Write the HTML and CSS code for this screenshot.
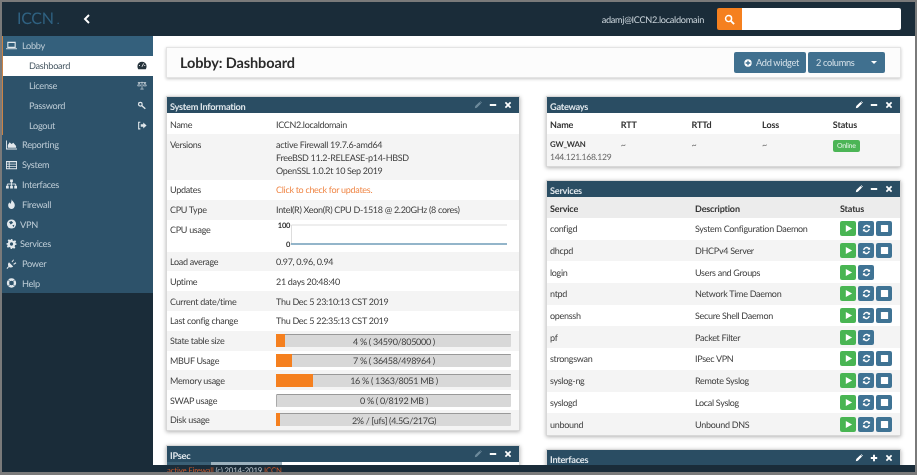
FILE: index.html
```html
<!DOCTYPE html>
<html lang="en">
<head>
<meta charset="utf-8">
<title>Lobby: Dashboard</title>
<link rel="stylesheet" href="styles.css">
</head>
<body>
<svg class="defs" width="0" height="0" aria-hidden="true">
  <symbol id="i-play" viewBox="0 0 10 10"><path d="M2 1l7 4-7 4z"/></symbol>
  <symbol id="i-refresh" viewBox="0 0 10 10"><path d="M1.200 4.400A3.900 3.900 0 0 1 8 2.300L9 1.300v3H6l1-1A2.500 2.500 0 0 0 2.700 4.400zM8.800 5.600A3.900 3.900 0 0 1 2 7.700L1 8.700v-3h3l-1 1a2.500 2.500 0 0 0 4.300-1.100z"/></symbol>
  <symbol id="i-stop" viewBox="0 0 10 10"><rect x="1" y="1" width="8" height="8" rx=".6"/></symbol>
  <symbol id="i-pencil" viewBox="0 0 10 10"><path d="M1 9l.6-2.600L6.800 1.200l2 2L3.600 8.400zM7.300.7l.7-.5 1.800 1.800-.5.700z"/></symbol>
  <symbol id="i-minus" viewBox="0 0 10 10"><rect x="1" y="3.800" width="8" height="2.400"/></symbol>
  <symbol id="i-close" viewBox="0 0 10 10"><path d="M2.500 1L5 3.500 7.500 1 9 2.500 6.500 5 9 7.500 7.500 9 5 6.500 2.500 9 1 7.500 3.500 5 1 2.500z"/></symbol>
  <symbol id="i-plus" viewBox="0 0 10 10"><path d="M3.800 1h2.400v2.800H9v2.400H6.200V9H3.800V6.200H1V3.800h2.800z"/></symbol>
</svg>
<div class="app">
  <header class="topbar">
    <div class="brand"><span class="logo">ICCN</span><span class="logo-dot">.</span></div>
    <svg class="collapse" viewBox="0 0 10 12"><path d="M7.500 1L2.500 6l5 5" fill="none" stroke="#fff" stroke-width="2.400"/></svg>
    <div class="user">adamj@ICCN2.localdomain</div>
    <div class="search">
      <button class="search-btn" type="button"><svg viewBox="0 0 12 12"><circle cx="5" cy="5" r="3.300" fill="none" stroke="#fff" stroke-width="1.600"/><path d="M7.500 7.500L11 11" stroke="#fff" stroke-width="2"/></svg></button>
      <div class="search-input"></div>
    </div>
  </header>
  <div class="body">
    <nav class="sidebar">
      <div class="nav-group">
        <div class="nav-item lobby"><svg class="nav-ico" viewBox="0 0 12 10"><path d="M2 1h8v5.500H2z" fill="none" stroke="currentColor" stroke-width="1.200"/><path d="M0 7.500h12v1H0z"/></svg><span>Lobby</span></div>
        <div class="nav-sub active"><span>Dashboard</span><svg class="sub-ico" viewBox="0 0 12 10"><path d="M6 .5a5.500 5.500 0 0 1 5.500 5.500c0 1.500-.5 2.600-1 3.500h-9C1 8.600.5 7.500.5 6A5.500 5.500 0 0 1 6 .5z"/><path d="M6 6.500L8 2.500" stroke="#fff" stroke-width="1"/><circle cx="3" cy="5" r=".7" fill="#fff"/><circle cx="9.300" cy="5" r=".7" fill="#fff"/></svg></div>
        <div class="nav-sub"><span>License</span><svg class="sub-ico" viewBox="0 0 12 10"><path d="M1 1.500h10M6 .5v8.500M4 9.300h4M2.500 1.500L.8 5.500h3.400zM9.500 1.500L7.800 5.500h3.400z" fill="none" stroke="currentColor" stroke-width=".8"/></svg></div>
        <div class="nav-sub"><span>Password</span><svg class="sub-ico" viewBox="0 0 12 10"><circle cx="4" cy="3.500" r="2.200" fill="none" stroke="currentColor" stroke-width="1.500"/><path d="M5.500 5l4.500 4" stroke="currentColor" stroke-width="1.700"/></svg></div>
        <div class="nav-sub"><span>Logout</span><svg class="sub-ico" viewBox="0 0 12 10"><path d="M4 1H2v8h2" fill="none" stroke="currentColor" stroke-width="1.300"/><path d="M4.500 3.500H7.500V1.500L11.500 5 7.500 8.500v-2H4.500z"/></svg></div>
      </div>
      <div class="nav-item"><svg class="nav-ico" viewBox="0 0 12 10"><path d="M0 0h1v8.800h11V10H0z"/><path d="M2 8V5l2-3 2 2 2-1.500L11 6v2z"/></svg><span>Reporting</span></div>
      <div class="nav-item"><svg class="nav-ico" viewBox="0 0 12 10"><path d="M0 .5h12v9H0zM1 2v1.500h2V2zM4 2v1.500h7V2zM1 4.500V6h2V4.500zM4 4.500V6h7V4.500zM1 7v1.500h2V7zM4 7v1.500h7V7z" fill-rule="evenodd"/></svg><span>System</span></div>
      <div class="nav-item"><svg class="nav-ico" viewBox="0 0 12 10"><path d="M4.500 0h3v3h-3zM0 7h3v3H0zM4.500 7h3v3h-3zM9 7h3v3H9z"/><path d="M1.500 7V5h9v2M6 3v4" fill="none" stroke="currentColor"/></svg><span>Interfaces</span></div>
      <div class="nav-item"><svg class="nav-ico" viewBox="0 0 12 12"><path d="M6 0c.5 2.500 4 4 4 7.500C10 10 8 12 6 12s-4-1.500-4-4.500C2 6 3 5 3.500 4c.3 1 .7 1.500 1.300 1.700C5.500 4 6.500 2 6 0z"/></svg><span>Firewall</span></div>
      <div class="nav-item short"><svg class="nav-ico" viewBox="0 0 12 12"><circle cx="6" cy="6" r="5.500"/><path d="M3 3.500l3-1 2 2-3 2zM7 7.500l2.500-.5-1 3z" fill="#2d526a"/></svg><span>VPN</span></div>
      <div class="nav-item short"><svg class="nav-ico" viewBox="0 0 12 12"><path d="M5 0h2l.3 1.700 1.500.6L10.200 1.400l1.400 1.400-.9 1.400.6 1.500L12 5v2l-1.700.3-.6 1.500.9 1.400-1.400 1.400-1.400-.9-1.500.6L7 12H5l-.3-1.700-1.500-.6-1.400.9L.4 9.200l.9-1.400-.6-1.500L0 7V5l1.700-.3.6-1.500-.9-1.400L2.800.4l1.400.9 1.500-.6z"/><circle cx="6" cy="6" r="2" fill="#2d526a"/></svg><span>Services</span></div>
      <div class="nav-item"><svg class="nav-ico" viewBox="0 0 12 12"><path d="M3 4l5 5c-1.500 1.500-3.500 1.500-5 .5L1 12 0 11l2.300-2.200C1.500 7.500 1.500 5.500 3 4zM6 3.500L8 .5l1 .8-2 2.700zM8 6l3-2 .8 1-2.800 2z"/></svg><span>Power</span></div>
      <div class="nav-item"><svg class="nav-ico" viewBox="0 0 12 12"><circle cx="6" cy="6" r="4.200" fill="none" stroke="currentColor" stroke-width="2.800"/><path d="M2 2l2.400 2.400M10 2L7.600 4.400M2 10l2.400-2.400M10 10L7.600 7.600" stroke="#2d526a"/></svg><span>Help</span></div>
    </nav>
    <main class="main">
      <div class="title-bar">
        <h1>Lobby: Dashboard</h1>
        <div class="title-actions">
          <button class="btn add" type="button"><svg viewBox="0 0 12 12"><circle cx="6" cy="6" r="5.500" fill="#fff"/><path d="M5 2.500h2V5h2.500v2H7v2.500H5V7H2.500V5H5z" fill="#3f7091"/></svg><span>Add widget</span></button>
          <button class="btn cols" type="button"><span>2 columns</span><i class="caret"></i></button>
        </div>
      </div>
      <div class="columns">
        <div class="col">
          <section class="panel">
            <div class="panel-head"><span class="head-title">System Information</span><span class="tools"><svg class="dim"><use href="#i-pencil"/></svg><svg><use href="#i-minus"/></svg><svg><use href="#i-close"/></svg></span></div>
            <div class="row r1"><div class="k">Name</div><div class="v">ICCN2.localdomain</div></div>
            <div class="row alt r-ver"><div class="k">Versions</div><div class="v">active Firewall 19.7.6-amd64<br>FreeBSD 11.2-RELEASE-p14-HBSD<br>OpenSSL 1.0.2t 10 Sep 2019</div></div>
            <div class="row"><div class="k">Updates</div><div class="v link">Click to check for updates.</div></div>
            <div class="row alt"><div class="k">CPU Type</div><div class="v">Intel(R) Xeon(R) CPU D-1518 @ 2.20GHz (8 cores)</div></div>
            <div class="row r-cpu"><div class="k">CPU usage</div><div class="v chart">
              <div class="chart-y"><b>100</b><b>0</b></div>
              <svg class="chart-plot" viewBox="0 0 216 24"><path d="M0.500 2h216M0.500 2v19" fill="none" stroke="#ddd"/><path d="M0 21h216" stroke="#6f9cb9" stroke-width="1.500"/></svg>
            </div></div>
            <div class="row alt"><div class="k">Load average</div><div class="v">0.97, 0.96, 0.94</div></div>
            <div class="row"><div class="k">Uptime</div><div class="v">21 days 20:48:40</div></div>
            <div class="row alt"><div class="k">Current date/time</div><div class="v">Thu Dec 5 23:10:13 CST 2019</div></div>
            <div class="row"><div class="k">Last config change</div><div class="v">Thu Dec 5 22:35:13 CST 2019</div></div>
            <div class="row alt"><div class="k">State table size</div><div class="v"><div class="bar"><div class="fill" style="width:3.700%"></div><span>4 % ( 34590/805000 )</span></div></div></div>
            <div class="row"><div class="k">MBUF Usage</div><div class="v"><div class="bar"><div class="fill" style="width:6.800%"></div><span>7 % ( 36458/498964 )</span></div></div></div>
            <div class="row alt"><div class="k">Memory usage</div><div class="v"><div class="bar"><div class="fill" style="width:16%"></div><span>16 % ( 1363/8051 MB )</span></div></div></div>
            <div class="row"><div class="k">SWAP usage</div><div class="v"><div class="bar"><div class="fill" style="width:0"></div><span>0 % ( 0/8192 MB )</span></div></div></div>
            <div class="row alt"><div class="k">Disk usage</div><div class="v"><div class="bar"><div class="fill" style="width:1.800%"></div><span>2% / [ufs] (4.5G/217G)</span></div></div></div>
          </section>
          <section class="panel clipped">
            <div class="panel-head"><span class="head-title">IPsec</span><span class="tools"><svg class="dim"><use href="#i-pencil"/></svg><svg><use href="#i-minus"/></svg><svg><use href="#i-close"/></svg></span></div>
            <div class="tabs"><i class="tab-a"></i><i class="tab-b"></i></div>
          </section>
        </div>
        <div class="col col-wide">
          <section class="panel gateways">
            <div class="panel-head"><span class="head-title">Gateways</span><span class="tools"><svg><use href="#i-pencil"/></svg><svg><use href="#i-minus"/></svg><svg><use href="#i-close"/></svg></span></div>
            <div class="gw-grid gw-head"><b>Name</b><b>RTT</b><b>RTTd</b><b>Loss</b><b>Status</b></div>
            <div class="gw-grid gw-row">
              <div class="gw-name"><b>GW_WAN</b><small>144.121.168.129</small></div>
              <div>~</div><div>~</div><div>~</div>
              <div><span class="online">Online</span></div>
            </div>
          </section>
          <section class="panel services tight">
            <div class="panel-head"><span class="head-title">Services</span><span class="tools"><svg><use href="#i-pencil"/></svg><svg><use href="#i-minus"/></svg><svg><use href="#i-close"/></svg></span></div>
            <div class="svc svc-head"><b>Service</b><b>Description</b><b>Status</b></div>
            <div class="svc"><div>configd</div><div>System Configuration Daemon</div><div class="acts"><i class="go"><svg><use href="#i-play"/></svg></i><i class="bl"><svg><use href="#i-refresh"/></svg></i><i class="bl"><svg><use href="#i-stop"/></svg></i></div></div>
            <div class="svc alt"><div>dhcpd</div><div>DHCPv4 Server</div><div class="acts"><i class="go"><svg><use href="#i-play"/></svg></i><i class="bl"><svg><use href="#i-refresh"/></svg></i><i class="bl"><svg><use href="#i-stop"/></svg></i></div></div>
            <div class="svc"><div>login</div><div>Users and Groups</div><div class="acts"><i class="go"><svg><use href="#i-play"/></svg></i><i class="bl"><svg><use href="#i-refresh"/></svg></i></div></div>
            <div class="svc alt"><div>ntpd</div><div>Network Time Daemon</div><div class="acts"><i class="go"><svg><use href="#i-play"/></svg></i><i class="bl"><svg><use href="#i-refresh"/></svg></i><i class="bl"><svg><use href="#i-stop"/></svg></i></div></div>
            <div class="svc"><div>openssh</div><div>Secure Shell Daemon</div><div class="acts"><i class="go"><svg><use href="#i-play"/></svg></i><i class="bl"><svg><use href="#i-refresh"/></svg></i><i class="bl"><svg><use href="#i-stop"/></svg></i></div></div>
            <div class="svc alt"><div>pf</div><div>Packet Filter</div><div class="acts"><i class="go"><svg><use href="#i-play"/></svg></i><i class="bl"><svg><use href="#i-refresh"/></svg></i></div></div>
            <div class="svc"><div>strongswan</div><div>IPsec VPN</div><div class="acts"><i class="go"><svg><use href="#i-play"/></svg></i><i class="bl"><svg><use href="#i-refresh"/></svg></i><i class="bl"><svg><use href="#i-stop"/></svg></i></div></div>
            <div class="svc alt"><div>syslog-ng</div><div>Remote Syslog</div><div class="acts"><i class="go"><svg><use href="#i-play"/></svg></i><i class="bl"><svg><use href="#i-refresh"/></svg></i><i class="bl"><svg><use href="#i-stop"/></svg></i></div></div>
            <div class="svc"><div>syslogd</div><div>Local Syslog</div><div class="acts"><i class="go"><svg><use href="#i-play"/></svg></i><i class="bl"><svg><use href="#i-refresh"/></svg></i><i class="bl"><svg><use href="#i-stop"/></svg></i></div></div>
            <div class="svc alt"><div>unbound</div><div>Unbound DNS</div><div class="acts"><i class="go"><svg><use href="#i-play"/></svg></i><i class="bl"><svg><use href="#i-refresh"/></svg></i><i class="bl"><svg><use href="#i-stop"/></svg></i></div></div>
          </section>
          <section class="panel clipped tight">
            <div class="panel-head"><span class="head-title">Interfaces</span><span class="tools"><svg><use href="#i-pencil"/></svg><svg><use href="#i-plus"/></svg><svg><use href="#i-close"/></svg></span></div>
          </section>
        </div>
      </div>
    </main>
  </div>
  <footer class="footer"><span class="fo">active Firewall</span> (c) 2014-2019 <span class="fo">ICCN</span></footer>
</div>
</body>
</html>
```

FILE: styles.css
```css
* { box-sizing: border-box; }
html, body { margin: 0; height: 100%; }
body {
  background: #7a7a7a;
  font: 9px/13px Lato, "Noto Sans", sans-serif;
  letter-spacing: -.3px;
  text-rendering: geometricPrecision;
  color: #404040;
  overflow: hidden;
}
.defs { position: absolute; }
.app {
  width: 913px;
  height: 470px;
  margin: 2px 0 0 2px;
  display: flex;
  flex-direction: column;
  background: #1a2c39;
  filter: blur(.4px);
}

/* top bar */
.topbar {
  height: 34px;
  flex: none;
  display: flex;
  align-items: center;
  padding-right: 14px;
  background: #1a2c39;
}
.brand { width: 81px; padding-left: 15px; }
.logo { font-size: 16px; color: #2f6181; letter-spacing: -.3px; }
.logo-dot { margin-left: 3px; color: #2f6181; font-size: 12px; }
.collapse { width: 8px; height: 10px; }
.user { margin-left: auto; color: #c8d2d9; font-size: 9.200px; }
.search { display: flex; margin-left: 13px; height: 22px; }
.search-btn {
  width: 25px;
  border: 0;
  padding: 0;
  background: #f5801f;
  border-radius: 2px 0 0 2px;
  display: flex;
  align-items: center;
  justify-content: center;
}
.search-btn svg { width: 11px; height: 11px; }
.search-input { width: 159px; background: #fff; border-radius: 0 2px 2px 0; }

/* layout */
.body { height: 429px; flex: none; display: flex; overflow: hidden; }
.sidebar { width: 151px; flex: none; background: #1a2c39; }
.nav-group { border-left: 1px solid #c98347; }
.nav-item {
  height: 19.800px;
  display: flex;
  align-items: center;
  gap: 5px;
  padding-left: 4px;
  background: #2d526a;
  color: #bccbd5;
  font-size: 9.200px;
}
.nav-item.short { gap: 3px; }
.nav-ico { width: 11px; height: 10px; fill: currentColor; flex: none; color: #e3e9ed; }
.nav-item.lobby { background: #34607c; padding-left: 3px; }
.nav-sub {
  height: 19.800px;
  display: flex;
  align-items: center;
  justify-content: space-between;
  padding: 0 6px 0 26px;
  background: #2d526a;
  color: #bccbd5;
  font-size: 9.200px;
}
.nav-sub.active { background: #fff; color: #4a5a65; }
.sub-ico { width: 10px; height: 9px; fill: currentColor; color: #dfe6ea; }
.nav-sub.active .sub-ico { color: #26333c; }

/* main */
.main { flex: 1; background: #fff; padding: 11px 14px 0 13px; overflow: hidden; }
.title-bar {
  height: 31px;
  display: flex;
  align-items: center;
  justify-content: space-between;
  padding: 0 15px 0 13px;
  background: #fcfcfc;
  border: 1px solid #e4e4e4;
  box-shadow: 0 1px 3px rgba(0,0,0,.22);
}
h1 { margin: 0; padding-top: 1px; font-size: 14.500px; font-weight: 700; color: #2b2b2b; letter-spacing: -.12px; }
.title-actions { display: flex; gap: 2px; }
.btn {
  height: 21px;
  border: 0;
  border-radius: 2px;
  background: #40708f;
  color: #d5e1e9;
  font: 9.200px Lato, "Noto Sans", sans-serif;
  letter-spacing: -.3px;
  display: flex;
  align-items: center;
  white-space: nowrap;
}
.btn.add { width: 72px; gap: 4px; padding: 0 0 0 10px; }
.btn.add svg { width: 8px; height: 8px; flex: none; }
.btn.cols { width: 77px; justify-content: space-between; padding: 0 8px; }
.caret { width: 0; height: 0; border: 3px solid transparent; border-top: 3px solid #fff; border-bottom: 0; }
.columns { display: flex; justify-content: space-between; margin-top: 18px; }
.col { width: 354px; display: flex; flex-direction: column; }
.col-wide { width: 355px; }

/* panels */
.panel { background: #fff; border: 1px solid #d8d8d8; box-shadow: 0 1px 4px rgba(0,0,0,.3); }
.panel + .panel { margin-top: 14px; }
.panel + .panel.tight { margin-top: 13px; }
.panel-head {
  height: 16px;
  display: flex;
  align-items: center;
  justify-content: space-between;
  padding: 0 7px 0 3px;
  background: #2a4d63;
  color: #dfe6eb;
  font-weight: 700;
  font-size: 9.200px;
  letter-spacing: -.25px;
}
.head-title { padding-top: 3px; }
.tools { display: flex; gap: 7px; }
.tools svg { width: 8px; height: 8px; fill: #fff; }
.tools svg.dim { fill: #6d8a9b; }
.row { height: 19.800px; display: flex; align-items: center; }
.row.alt { background: #f4f4f4; }
.r1 { height: 21px; padding-top: 2px; }
.r-ver { height: 46px; align-items: flex-start; padding-top: 4px; }
.r-cpu { height: 32px; align-items: flex-start; padding-top: 1px; }
.r-cpu .k { margin-top: 2px; }
.k { width: 109px; flex: none; padding-left: 3px; }
.v { flex: 1; min-width: 0; padding-right: 8px; }
.link { color: #f0894a; }
.chart { display: flex; gap: 1px; }
.chart-y { width: 14px; height: 28px; display: flex; flex-direction: column; justify-content: space-between; align-items: flex-end; font-size: 7.500px; line-height: 9px; color: #333; }
.chart-plot { width: 216px; height: 24px; flex: none; margin-top: 2px; }
.bar {
  position: relative;
  height: 13px;
  background: #d8d8d8;
  border-top: 1px solid #999;
  border-left: 1px solid #aaa;
  border-radius: 1px;
  display: flex;
  align-items: center;
  justify-content: center;
}
.bar span { position: relative; }
.fill { position: absolute; left: -1px; top: -1px; bottom: 0; background: #f5801f; }

.clipped { height: 30px; overflow: hidden; }
.tabs { display: flex; height: 3px; }
.tab-a { width: 44px; background: #3b6076; }
.tab-b { width: 71px; background: #9cb1bd; }

/* gateways */
.gw-grid { display: grid; grid-template-columns: 70.700px 70.700px 70.700px 70.700px 1fr; padding-left: 3px; }
.gw-head { height: 21px; padding-top: 2px; align-items: center; color: #333; letter-spacing: -.1px; }
.gw-row { height: 32px; background: #f5f5f5; padding-top: 4px; color: #666; }
.gw-name b { display: block; color: #333; font-size: 7.800px; line-height: 13px; letter-spacing: -.2px; }
.gw-name small { display: block; font-size: 8.600px; line-height: 13px; }
.online {
  display: inline-block;
  width: 27px;
  height: 12px;
  line-height: 12px;
  text-align: center;
  background: #4cb556;
  color: #e5f5e7;
  font-size: 7px;
  border-radius: 2px;
}

/* services */
.svc { display: grid; grid-template-columns: 145px 145px 1fr; align-items: center; height: 21.700px; padding-left: 3px; }
.svc.alt { background: #f4f4f4; }
.svc-head { height: 21px; padding-top: 2px; background: #ececec; color: #333; letter-spacing: -.15px; }
.acts { display: flex; gap: 2px; }
.acts i { width: 16px; height: 15px; border-radius: 2px; display: flex; align-items: center; justify-content: center; }
.acts .go { background: #49b553; }
.acts .bl { background: #3f7394; }
.acts svg { width: 9px; height: 9px; fill: #fff; }

/* footer */
.footer { height: 7px; flex: none; overflow: hidden; padding-left: 165px; color: #b9c3ca; font-size: 7.800px; letter-spacing: -.15px; line-height: 11px; background: #1a2c39; }
.fo { color: #c9582a; }
```
